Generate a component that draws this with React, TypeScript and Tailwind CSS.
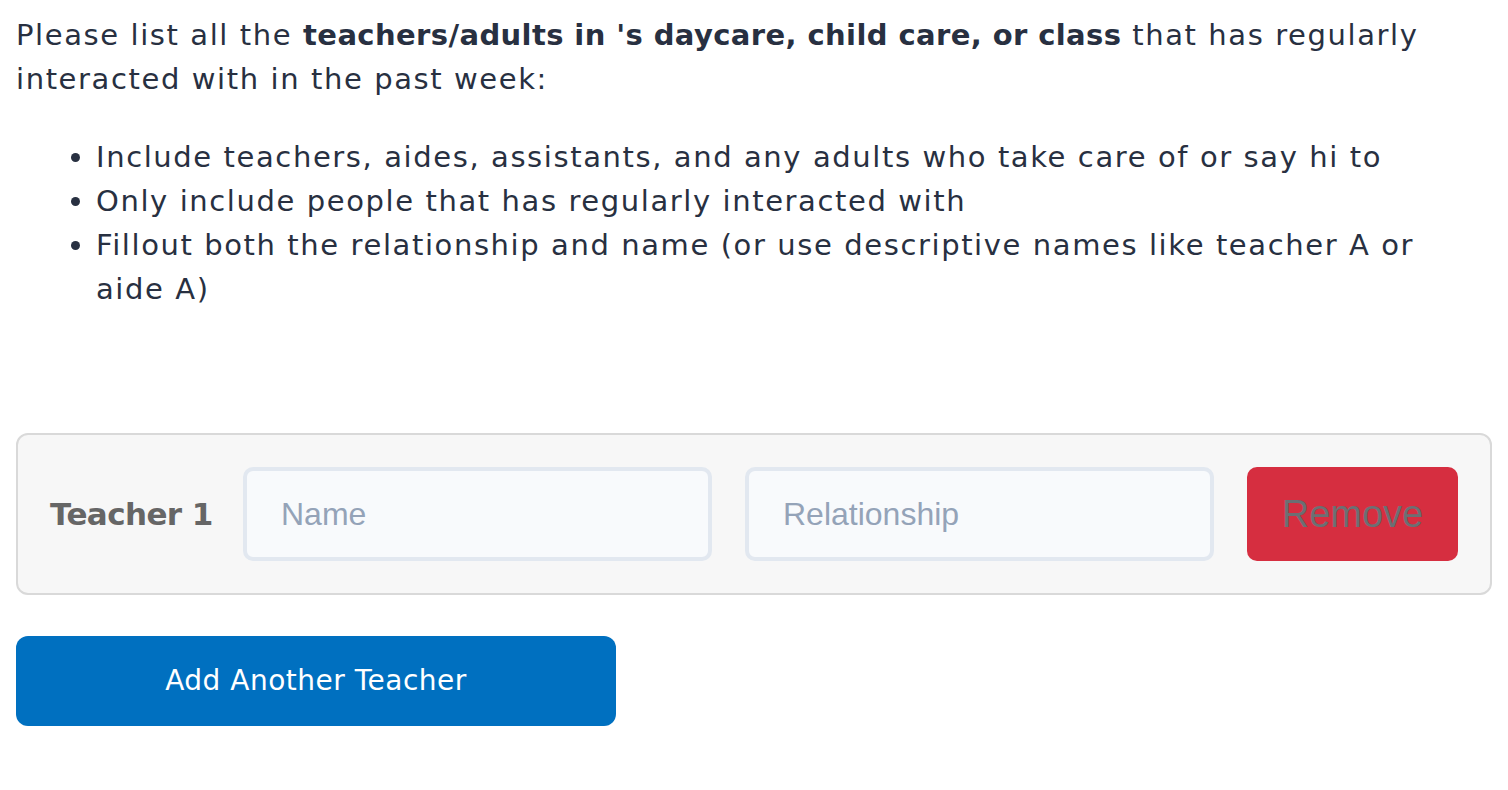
import React, { useState } from 'react'

interface Teacher {
  id: number
  name: string
  relationship: string
}

const App: React.FC = () => {
  const [teachers, setTeachers] = useState<Teacher[]>([{ id: 1, name: '', relationship: '' }])

  const addTeacher = () => {
    setTeachers([...teachers, { id: Date.now(), name: '', relationship: '' }])
  }

  const removeTeacher = (id: number) => {
    setTeachers(teachers.filter((t) => t.id !== id))
  }

  return (
    <div className="min-h-screen bg-white px-4 pt-[13px] font-['DejaVu_Sans',sans-serif] text-[#283041]">
      <p className="text-[29px] leading-[44px] tracking-[1.6px]">
        Please list all the <b className="tracking-[0.4px]">teachers/adults in 's daycare, child care, or class</b> that has regularly
        interacted with in the past week:
      </p>
      <ul className="mt-[34px] list-disc pl-[80px] text-[29px] leading-[44px] tracking-[1.6px]">
        <li>Include teachers, aides, assistants, and any adults who take care of or say hi to</li>
        <li>Only include people that has regularly interacted with</li>
        <li>Fillout both the relationship and name (or use descriptive names like teacher A or aide A)</li>
      </ul>

      <div className="mt-[122px] flex flex-col gap-4">
        {teachers.map((t, i) => (
          <div
            key={t.id}
            className="flex items-center gap-[33px] rounded-xl border-2 border-[#d9d9d9] bg-[#f7f7f7] p-8"
          >
            <span className="w-[160px] shrink-0 whitespace-nowrap text-[31px] font-bold tracking-[-0.6px] text-[#666666]">
              Teacher {i + 1}
            </span>
            <input
              placeholder="Name"
              className="h-[94px] w-[469px] rounded-[10px] border-4 border-[#e2e8f0] bg-[#f8fafc] px-[34px] font-['Liberation_Sans',sans-serif] text-[32px] outline-none placeholder:text-[#94a3b8]"
            />
            <input
              placeholder="Relationship"
              className="h-[94px] w-[469px] rounded-[10px] border-4 border-[#e2e8f0] bg-[#f8fafc] px-[34px] font-['Liberation_Sans',sans-serif] text-[32px] outline-none placeholder:text-[#94a3b8]"
            />
            <button
              onClick={() => removeTeacher(t.id)}
              className="h-[94px] w-[212px] rounded-[10px] bg-[#d62e40] font-['Liberation_Sans',sans-serif] text-[38px] text-[#6c6f73]"
            >
              Remove
            </button>
          </div>
        ))}
      </div>

      <button
        onClick={addTeacher}
        className="mt-[41px] h-[90px] w-[600px] rounded-xl bg-[#0070c0] text-[28px] tracking-[0.5px] text-white"
      >
        Add Another Teacher
      </button>
    </div>
  )
}

export default App
